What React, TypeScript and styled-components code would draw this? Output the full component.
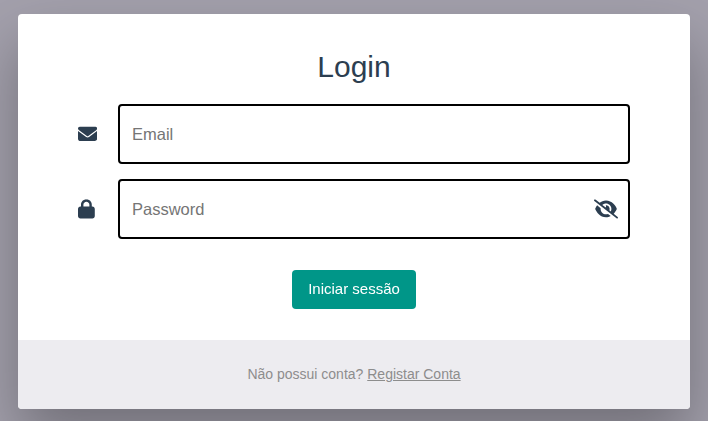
import React from "react";
import styled, { createGlobalStyle } from "styled-components";
import { FaEnvelope, FaLock, FaEyeSlash } from "react-icons/fa6";

const GlobalStyle = createGlobalStyle`
  *, *::before, *::after { box-sizing: border-box; }
  html { height: 100%; overflow: hidden; background: #a3a0ac; }
  body { margin: 0; overflow: hidden; color: #2c3e50; font: 16px/1.5 "Liberation Sans", Arial, sans-serif; }
`;

const Page = styled.main`
  display: flex;
  align-items: flex-start;
  justify-content: center;
  height: 421px;
  padding: 14px 18px 12px;
`;

const Card = styled.section`
  width: 100%;
  height: 395px;
  display: flex;
  flex-direction: column;
  overflow: hidden;
  background: #fff;
  border-radius: 4px;
  box-shadow: 0 30px 60px 0 rgba(0, 0, 0, 0.3);
`;

const Form = styled.form`
  flex: 1;
  display: flex;
  flex-direction: column;
  align-items: center;
  padding: 30px 60px 0;
`;

const Title = styled.h1`
  margin: 0 0 15px;
  font-size: 30px;
  font-weight: 400;
  line-height: 45px;
`;

const Field = styled.label`
  width: 100%;
  height: 60px;
  margin-bottom: 15px;
  display: flex;
  align-items: center;
`;

const FieldIcon = styled.span<{ $width: number }>`
  flex: 0 0 40px;
  display: flex;
  svg {
    width: ${({ $width }) => $width}px;
    height: 19.2px;
    transform: translateY(0.3px);
  }
`;

const InputFrame = styled.span`
  flex: 1;
  height: 60px;
  display: flex;
  align-items: center;
  padding: 0 10px 0 12px;
  border: 2px solid #000;
  border-radius: 4px;
`;

const Input = styled.input`
  flex: 1;
  min-width: 0;
  padding: 0;
  border: 0;
  outline: 0;
  background: transparent;
  color: inherit;
  font: 16.5px "Liberation Sans", Arial, sans-serif;
  &::placeholder { color: #757575; }
`;

const Toggle = styled.button`
  display: flex;
  padding: 0;
  border: 0;
  background: none;
  color: inherit;
  svg {
    width: 24px;
    height: 19.2px;
    transform: translateY(0.3px);
  }
`;

const Submit = styled.button`
  width: 124px;
  height: 39px;
  margin-top: 16px;
  padding: 0 0 2px;
  border: 0;
  border-radius: 4px;
  background: #009688;
  color: #fff;
  font: 15px "Liberation Sans", Arial, sans-serif;
  will-change: transform;
`;

const Footer = styled.footer`
  height: 69px;
  display: flex;
  align-items: center;
  justify-content: center;
  background: #edecf0;
  color: #8d8d8d;
  font-size: 14px;
`;

const RegisterLink = styled.a`
  color: inherit;
  text-decoration: underline;
`;

export default function App() {
  return (
    <>
      <GlobalStyle />
      <Page>
        <Card>
          <Form>
            <Title>Login</Title>
            <Field>
              <FieldIcon $width={19.2}><FaEnvelope /></FieldIcon>
              <InputFrame><Input type="email" placeholder="Email" /></InputFrame>
            </Field>
            <Field>
              <FieldIcon $width={16.8}><FaLock /></FieldIcon>
              <InputFrame>
                <Input type="password" placeholder="Password" />
                <Toggle type="button"><FaEyeSlash /></Toggle>
              </InputFrame>
            </Field>
            <Submit type="button">Iniciar sessão</Submit>
          </Form>
          <Footer>
            <span>Não possui conta? <RegisterLink href="#">Registar Conta</RegisterLink></span>
          </Footer>
        </Card>
      </Page>
    </>
  );
}
